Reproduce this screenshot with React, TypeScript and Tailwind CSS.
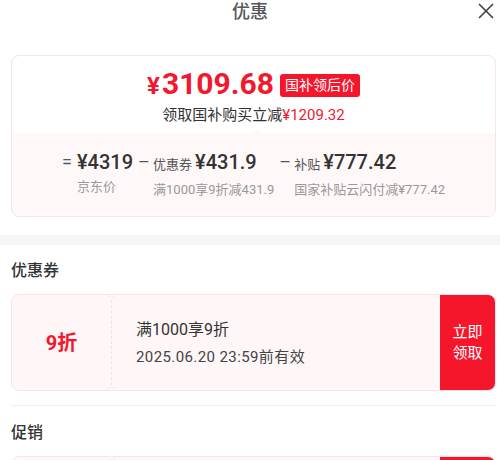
import { X } from "lucide-react";

const RED = "text-[#f2182d]";

function PriceColumn({
  op,
  label,
  value,
  sub,
}: {
  op: string;
  label?: string;
  value: string;
  sub: string;
}) {
  return (
    <div className="flex items-start">
      <span className="w-[15px] text-[18px] leading-[24px] text-[#555]">{op}</span>
      <div className="flex flex-col">
        <div className="flex items-baseline leading-[24px]">
          {label && <span className="mr-[3px] text-[13px] text-[#555]">{label}</span>}
          <span className="text-[20px] font-medium text-[#333]">{value}</span>
        </div>
        <span className="mt-[4px] text-[13px] leading-[18px] text-[#999]">{sub}</span>
      </div>
    </div>
  );
}

function Coupon() {
  return (
    <div className="ml-[11px] flex h-[97px] w-[485px] overflow-hidden rounded-[8px] border border-[#fae4e7] bg-[#fff6f7]">
      <div className="flex w-[99px] items-center justify-center">
        <span className={`text-[20px] font-bold ${RED}`}>9折</span>
      </div>
      <div className="relative border-l border-dashed border-[#f6dfe2]">
        <span className="absolute -left-[5px] -top-[6px] h-[9px] w-[9px] rounded-full border border-[#fae4e7] bg-white" />
        <span className="absolute -bottom-[6px] -left-[5px] h-[9px] w-[9px] rounded-full border border-[#fae4e7] bg-white" />
      </div>
      <div className="flex flex-1 flex-col justify-center pl-[24px]">
        <span className="text-[16px] leading-[22px] text-[#333]">满1000享9折</span>
        <span className="mt-[6px] text-[15px] leading-[20px] tracking-[0.4px] text-[#444]">2025.06.20 23:59前有效</span>
      </div>
      <div className="flex w-[55px] items-center justify-center bg-[#f5162c] text-center text-[15px] leading-[21px] text-white">
        立即
        <br />
        领取
      </div>
    </div>
  );
}

export default function App() {
  return (
    <div className="h-[460px] w-[500px] overflow-hidden bg-white font-['Roboto','Noto_Sans_CJK_SC',sans-serif]">
      <div className="relative h-[24px] text-center text-[18px] font-medium leading-[24px] text-[#555]">
        优惠
        <X className="absolute right-[1px] top-[-2px] h-[26px] w-[26px] text-[#444]" strokeWidth={1.6} />
      </div>

      <div className="ml-[11px] mt-[31px] w-[485px] overflow-hidden rounded-[8px] border border-[#f7e4e6]">
        <div className="flex h-[77px] flex-col items-center pt-[10px]">
          <div className="flex items-center">
            <span className={`text-[30px] font-bold leading-[36px] ${RED}`}>
              <span className="mr-[2px] text-[24px]">¥</span>3109.68
            </span>
            <span className="ml-[6px] rounded-[3px] bg-[#f5162c] px-[5px] text-[14px] leading-[23px] text-white">
              国补领后价
            </span>
          </div>
          <div className="mt-[1px] text-[15px] leading-[20px] text-[#333]">
            领取国补购买立减<span className={RED}>¥1209.32</span>
          </div>
        </div>
        <div className="relative h-[83px] bg-[#fff8f9] pt-[17px]">
          <span className="absolute left-[242px] top-[-3px] h-[6px] w-[6px] rotate-45 bg-[#fff8f9]" />
          <div className="flex justify-center gap-[5px]">
            <PriceColumn op="=" value="¥4319" sub="京东价" />
            <PriceColumn op="–" label="优惠券" value="¥431.9" sub="满1000享9折减431.9" />
            <PriceColumn op="–" label="补贴" value="¥777.42" sub="国家补贴云闪付减¥777.42" />
          </div>
        </div>
      </div>

      <div className="mt-[18px] h-[10px] bg-[#f6f6f9]" />

      <div className="ml-[11px] mt-[15px] text-[16px] font-medium leading-[22px] text-[#333]">优惠券</div>
      <div className="mt-[12px]">
        <Coupon />
      </div>

      <div className="ml-[11px] mt-[14px] h-px w-[485px] bg-[#eeeeee]" />

      <div className="ml-[11px] mt-[16px] text-[16px] font-medium leading-[22px] text-[#333]">促销</div>
      <div className="mt-[12px]">
        <Coupon />
      </div>
    </div>
  );
}
